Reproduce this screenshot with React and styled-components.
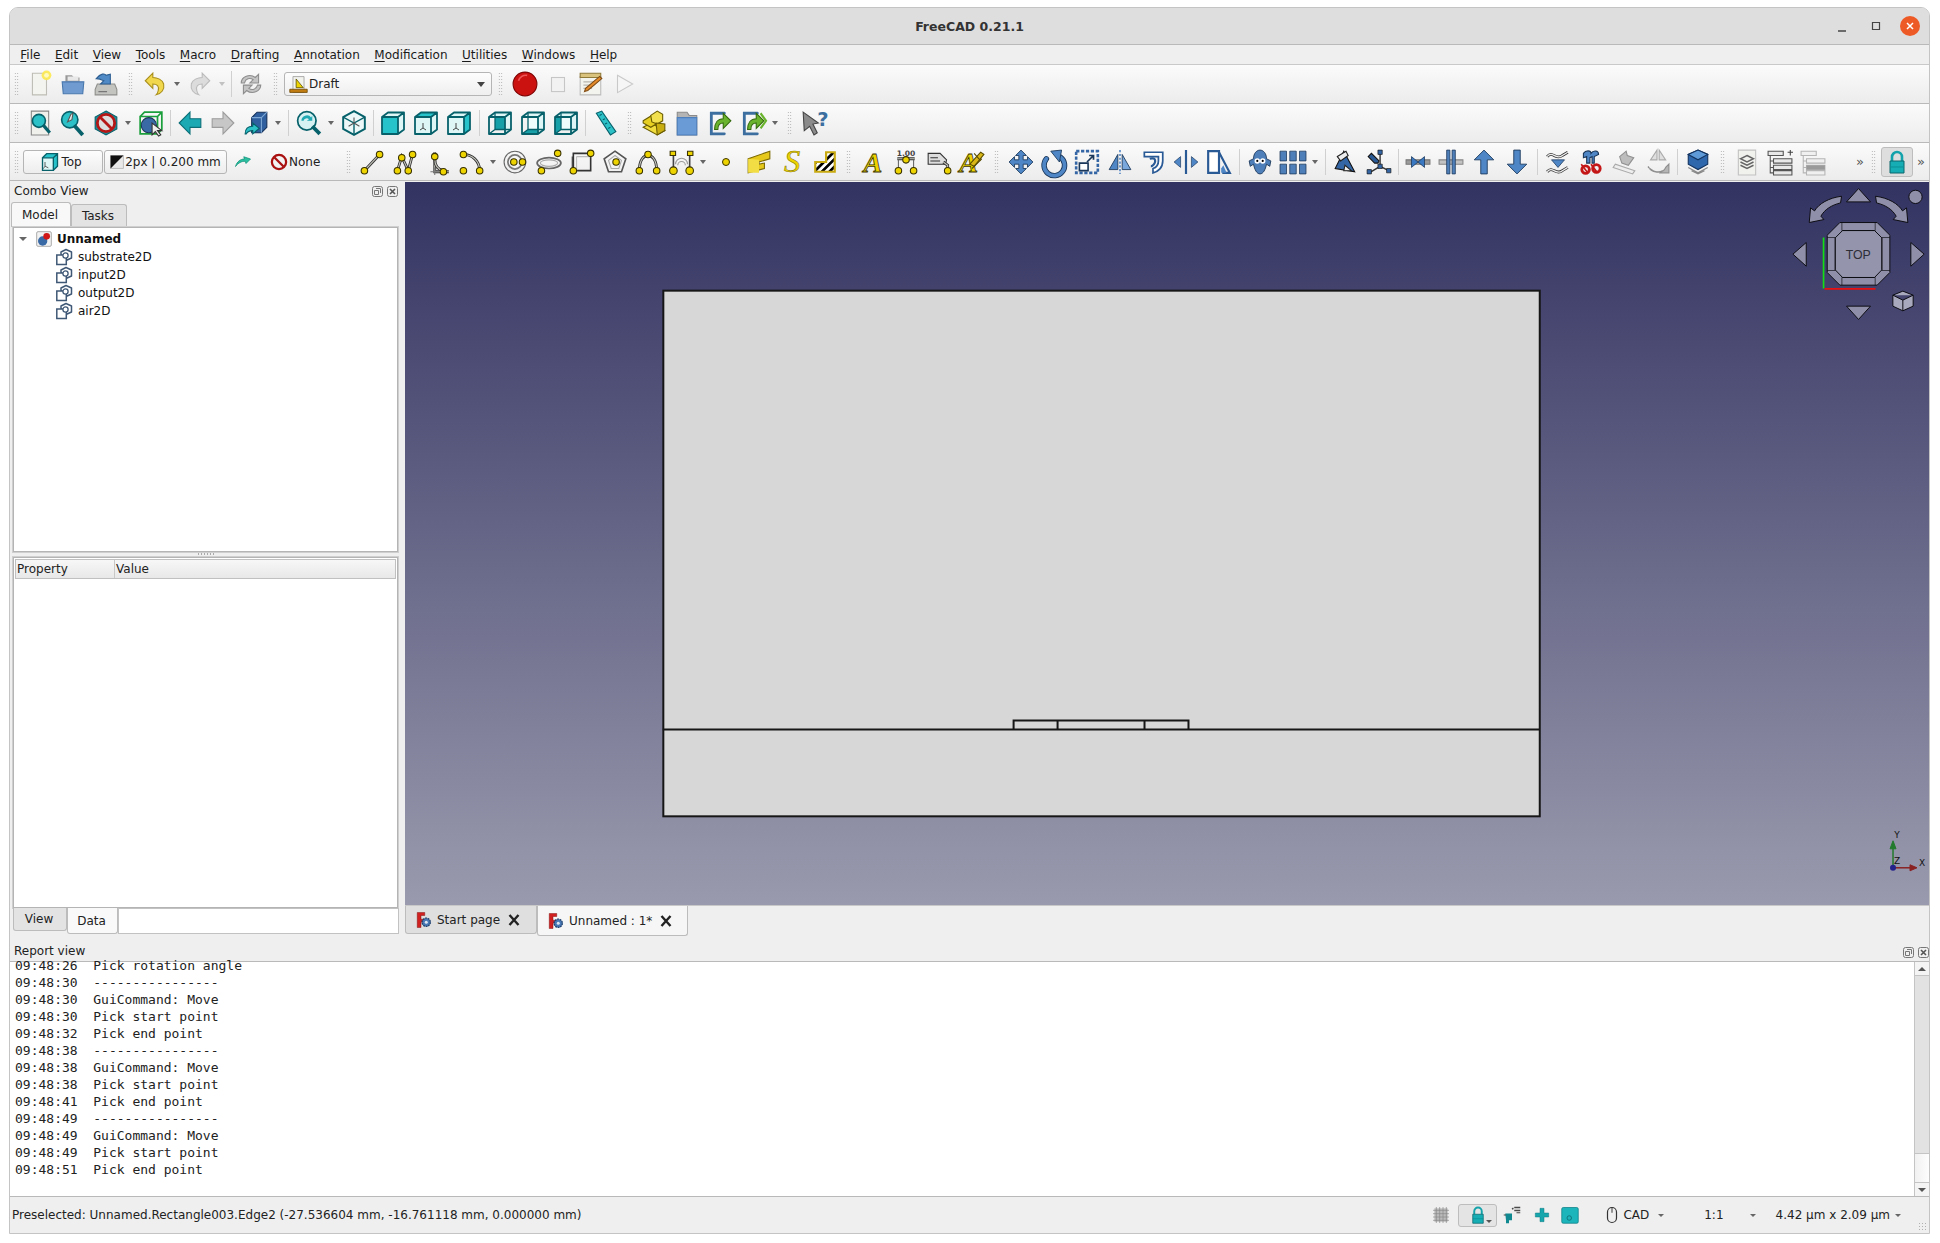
import React from "react";
import styled, { createGlobalStyle } from "styled-components";

const Global = createGlobalStyle`
  html, body { margin: 0; padding: 0; background: #fff; }
  body { font-family: "DejaVu Sans", sans-serif; font-size: 12px; color: #111; }
`;
const Page = styled.div`
  width: 1940px; height: 1243px; padding: 7px 10px 9px 9px; box-sizing: border-box; background: #fff;
`;
const Win = styled.div`
  width: 100%; height: 100%; display: flex; flex-direction: column; box-sizing: border-box;
  border: 1px solid #c4c4c4; border-radius: 9px 9px 0 0; background: #efefef; overflow: hidden;
`;
const TitleBar = styled.div`
  height: 36px; flex: none; background: #dedede; border-bottom: 1px solid #b9b9b9; position: relative;
  display: flex; align-items: center; justify-content: center; font-weight: 700; font-size: 12.5px; color: #333;
`;
const WinBtns = styled.div`
  position: absolute; right: 9px; top: 8px; display: flex; align-items: center; gap: 14px;
`;
const WinBtn = styled.div`
  width: 20px; height: 20px; display: flex; align-items: center; justify-content: center;
  border-radius: 50%; background: ${p => (p.$close ? "#ee5a25" : "transparent")};
`;
const MenuBar = styled.div`
  height: 19px; flex: none; padding: 0 0 0 3px; display: flex; align-items: center; background: #efefef;
  border-bottom: 1px solid #c9c9c9; 
`;
const MenuItem = styled.span`
  padding: 0 7.28px; line-height: 20px; color: #1a1a1a;
  & u { text-underline-offset: 2px; text-decoration-thickness: 1px; }
`;
const Bar = styled.div`
  height: ${p => p.$h || 39}px; flex: none; display: flex; align-items: center; box-sizing: border-box;
  background: linear-gradient(#fbfbfb, #ececec); border-bottom: 1px solid #b9b9b9;
`;
const Tool = styled.div`
  width: ${p => p.$w || 33}px; height: 30px; flex: none; display: flex; align-items: center; justify-content: center;
`;
const Drop = styled.div`
  width: 12px; flex: none; height: 30px; display: flex; align-items: center; justify-content: center;
  &::before { content: ""; border-left: 3.5px solid transparent; border-right: 3.5px solid transparent; border-top: 4px solid ${p => (p.$dim ? "#c2c2c2" : "#666")}; }
`;
const Sep = styled.div`
  width: ${p => p.$w || 6}px; flex: none; height: 26px; display: flex; justify-content: center;
  &::before { content: ""; width: 1px; background: #d0d0d0; }
`;
const Grip = styled.div`
  width: ${p => p.$w || 16}px; flex: none; height: 24px; display: flex; justify-content: center;
  &::before { content: ""; width: 5px; background: radial-gradient(circle, #a9a9a9 0.6px, transparent 0.8px) 0 0 / 2.5px 3px; }
`;
const Combo = styled.div`
  width: 208px; height: 24px; flex: none; box-sizing: border-box; border: 1px solid #b5b5b5; border-radius: 3px;
  background: linear-gradient(#fdfdfd, #efefef); display: flex; align-items: center; padding: 0 6px 0 4px; gap: 1px; color: #222; font-size: 12px;
`;
const ComboArrow = styled.span`
  margin-left: auto; border-left: 4px solid transparent; border-right: 4px solid transparent; border-top: 5px solid #444;
`;
const PushBtn = styled.div`
  width: ${p => p.$w}px; height: 24px; flex: none; box-sizing: border-box; border: 1px solid #b5b5b5; border-radius: 3px; margin-right: 1px; padding-right: ${p => p.$pr || 0}px;
  background: linear-gradient(#fdfdfd, #ededed); display: flex; align-items: center; justify-content: center; gap: 1px; color: #222;
`;
const NoneBtn = styled.div`
  width: 68px; margin-left: 10px; margin-right: 7px; flex: none; display: flex; align-items: center; gap: 1px; padding-left: 3px; box-sizing: border-box; color: #222;
`;
const LockBtn = styled.div`
  width: 32px; height: 30px; flex: none; box-sizing: border-box; border: 1px solid #bdbdbd; border-radius: 3px; background: #dedede;
  display: flex; align-items: center; justify-content: center;
`;
const Chev = styled.div`
  flex: none; width: ${p => p.$w || 12}px; margin-left: ${p => p.$ml || 0}px; text-align: center; color: #555; font-size: 13px; font-family: "DejaVu Sans", sans-serif;
`;
const Main = styled.div`
  flex: none; height: 754px; display: flex;
`;
const LeftDock = styled.div`
  width: 395px; flex: none; display: flex; flex-direction: column; box-sizing: border-box; padding: 0 2px 0 2px;
`;
const DockHead = styled.div`
  height: 20px; flex: none; display: flex; align-items: center; padding-left: 2px; padding-right: 5px; position: relative; color: #222;
`;
const DockBtns = styled.div`
  margin-left: auto; display: flex; gap: 4px; margin-bottom: ${p => p.$mb || 0}px;
`;
const Tabs = styled.div`
  height: 26px; flex: none; display: flex; align-items: flex-end; margin-left: -1px;
`;
const Tab = styled.div`
  width: ${p => p.$w}px; box-sizing: border-box; height: ${p => (p.$on ? 25 : 23)}px; display: flex; align-items: center; justify-content: center; padding-right: 2px;
  background: ${p => (p.$on ? "#f8f8f8" : "#e3e3e3")}; border: 1px solid #bcbcbc; border-bottom: 0; border-radius: 3px 3px 0 0; color: #222;
`;
const TreeFrame = styled.div`
  height: 325px; flex: none; box-sizing: border-box; border: 1px solid #b4b4b4; outline: 1px solid #cfcfcf; background: #fff; margin: 0 5px 0 1px; padding-top: 2px;
`;
const TreeRow = styled.div`
  height: 18px; display: flex; align-items: center; gap: ${p => p.$g || 6}px; padding-left: ${p => p.$in}px; font-weight: ${p => (p.$b ? 700 : 400)}; color: #111;
`;
const Twisty = styled.span`
  width: 0; height: 0; border-left: 4px solid transparent; border-right: 4px solid transparent; border-top: 4px solid #666; margin-right: 4px;
`;
const Splitter = styled.div`
  height: 5px; flex: none; position: relative;
  &::after { content: ""; position: absolute; left: 185px; top: 1px; width: 17px; height: 2px; background: radial-gradient(circle, #aaa 0.6px, transparent 0.8px) 0 0 / 3px 2px; }
`;
const PropFrame = styled.div`
  height: 351px; flex: none; box-sizing: border-box; border: 1px solid #b4b4b4; outline: 1px solid #cfcfcf; margin: 0 5px 0 1px; padding: 1px; background: #fff; display: flex; flex-direction: column;
`;
const PropHead = styled.div`
  height: 20px; flex: none; display: flex; background: linear-gradient(#f7f7f7, #e8e8e8); border: 1px solid #c0c0c0; box-sizing: border-box; color: #222;
`;
const PropCell = styled.div`
  width: ${p => p.$w}; box-sizing: border-box; padding-left: 1px; line-height: 19px; border-right: ${p => (p.$line ? "1px solid #c8c8c8" : "0")};
`;
const BottomTabs = styled.div`
  height: 26px; flex: none; display: flex; align-items: stretch; margin: 0 4px 0 1px;
`;
const BTab = styled.div`
  width: ${p => p.$w}px; flex: none; box-sizing: border-box; height: ${p => (p.$on ? 26 : 23)}px; display: flex; align-items: center; justify-content: center; color: #222; padding-right: 2px;
  background: ${p => (p.$on ? "#f9f9f9" : "#e3e3e3")}; border: 1px solid #bcbcbc; border-top: 0; border-radius: 0 0 3px 3px;
`;
const BFill = styled.div`
  flex: 1; background: #fff; border: 1px solid #c2c2c2; box-sizing: border-box; height: 26px;
`;
const Center = styled.div`
  flex: 1; min-width: 0; display: flex; flex-direction: column;
`;
const Viewport = styled.div`
  flex: none; height: 723px; position: relative; overflow: hidden; margin-top: 1px;
  background: linear-gradient(#333362, #9a9aae); border-bottom: 1px solid #c8c8c8;
`;
const CanvasSvg = styled.svg`
  position: absolute; left: 0; top: 0; width: 100%; height: 100%;
`;
const MdiTabs = styled.div`
  flex: 1; display: flex; align-items: flex-start;
`;
const MdiTab = styled.div`
  width: ${p => p.$w}px; box-sizing: border-box; height: ${p => (p.$on ? 30 : 28)}px; display: flex; align-items: center; gap: 4px; padding-left: 9px; color: #222; flex: none;
  background: ${p => (p.$on ? "#f6f6f6" : "#dfdfdf")}; border: 1px solid #bcbcbc; border-top: 0; border-radius: 0 0 3px 3px;
`;
const CloseX = styled.svg`
  width: 14px; height: 14px; margin-left: 3px; flex: none;
`;
const Report = styled.div`
  height: 262px; flex: none; display: flex; flex-direction: column;
`;
const ReportHead = styled.div`
  height: 25px; flex: none; display: flex; align-items: flex-end; padding: 0 0 1px 4px; color: #222; position: relative;
  & > span { line-height: 18px; }
`;
const ReportBody = styled.div`
  flex: 1; display: flex; border-top: 1px solid #b9b9b9; border-bottom: 1px solid #b9b9b9; background: #fff; min-height: 0;
`;
const Log = styled.div`
  flex: 1; overflow: hidden; font-family: "DejaVu Sans Mono", monospace; font-size: 13px; line-height: 17px; color: #222; padding-left: 5px; white-space: pre;
  margin-top: -5px;
`;
const Scroll = styled.div`
  width: 14px; flex: none; display: flex; flex-direction: column; background: #e9e9e9; border-left: 1px solid #c4c4c4;
`;
const ScrollEnd = styled.div`
  height: 13px; flex: none; background: #f4f4f4; display: flex; align-items: center; justify-content: center;
  border-top: ${p => (p.$up ? "0" : "1px solid #c4c4c4")};
  &::before { content: ""; border-left: 4px solid transparent; border-right: 4px solid transparent; ${p => (p.$up ? "border-bottom: 4px solid #555;" : "border-top: 4px solid #555;")} }
`;
const ScrollThumb = styled.div`
  height: 179px; flex: none; background: #e2e2e2; border-top: 1px solid #c4c4c4; border-bottom: 1px solid #c4c4c4; box-sizing: border-box;
`;
const ScrollTrack = styled.div`
  flex: 1; background: linear-gradient(90deg, #f1f1f1, #fdfdfd);
`;
const Status = styled.div`
  flex: 1; display: flex; align-items: center; padding-left: 2px; color: #222; position: relative;
`;
const StatusMsg = styled.span` flex: 1; `;
const StatBtn = styled.div`
  width: ${p => p.$w}px; flex: none; display: flex; align-items: center; justify-content: center; margin-left: ${p => p.$ml || 0}px; gap: 3px;
`;
const StatLock = styled.div`
  width: 39px; height: 23px; flex: none; box-sizing: border-box; border: 1px solid #bdbdbd; border-radius: 3px; background: #e4e4e4; display: flex; align-items: center; justify-content: center; position: relative;
  &::after { content: ""; position: absolute; right: 4px; bottom: 3px; border-left: 3px solid transparent; border-right: 3px solid transparent; border-top: 3px solid #555; }
`;
const StatDrop = styled.span`
  flex: none; margin-left: ${p => p.$ml || 0}px; border-left: 3px solid transparent; border-right: 3px solid transparent; border-top: 3px solid #666;
`;
const StatText = styled.span`
  flex: none; margin-left: ${p => p.$ml || 0}px; color: #222;
`;
const Resize = styled.div`
  position: absolute; right: 1px; bottom: 1px; width: 10px; height: 10px;
  background: radial-gradient(circle, #b0b0b0 0.7px, transparent 0.9px) 0 0 / 3px 3px;
`;
const Ico = styled.svg`
  width: ${p => p.$s || 26}px; height: ${p => p.$s || 26}px; flex: none; overflow: visible;
`;

/* ---- drawings ---- */
const I = ({ children, s, vb = "0 0 24 24" }) => <Ico $s={s} viewBox={vb}>{children}</Ico>;
const Dot = ({ x, y, r = 3 }) => <circle cx={x} cy={y} r={r} fill="#edd400" stroke="#3a3300" strokeWidth="1" />;
const DL = ({ d }) => (<g fill="none"><path d={d} stroke="#333" strokeWidth="2.6" /><path d={d} stroke="#c8c8c0" strokeWidth="1" /></g>);
const BD = "#1a3658", TL = "#27c3cb", TD = "#07616b";

const NewDoc = () => <I><path d="M5 2h13v20H5z" fill="#f3f3ef" stroke="#bdbdb5" /><circle cx="18" cy="4" r="4.5" fill="#fce94f" opacity=".9" /><circle cx="18" cy="4" r="2.2" fill="#fffbc0" /></I>;
const OpenF = () => <I><path d="M5 4h6l2 2h5v4H5z" fill="#999" /><path d="M2 10h20l-1 11H3z" fill="#6f9bd0" stroke="#4a78ad" /><path d="M7 5h10v4H7z" fill="#e8e8e8" /></I>;
const SaveD = () => <I><path d="M4 12h16l2 5v5H2v-5z" fill="#c3c3c0" stroke="#8d8d8a" /><path d="M5 19h8" stroke="#777" /><path d="M3 7c4-5 8-5 9-3l4-1v9h-9l3-3c-2-1-4-2-7-2z" fill="#4f8ac6" stroke="#2d5e92" /></I>;
const Undo = ({ dim }) => <I><g transform={dim ? "translate(24 0) scale(-1 1)" : ""}><path d="M10 2L3 9l7 7v-4c4 0 6 2 5 6-.4 2-1 3-2 4 5-1 8-5 7-10-1-4-6-6-10-6z" fill={dim ? "#dcdcdc" : "#f0d74b"} stroke={dim ? "#bcbcbc" : "#a98f1c"} /></g></I>;
const Refresh = () => <I><path d="M3 11c0-6 8-9 13-5l3-3v8h-8l3-3c-3-2-7-1-8 3z" fill="#c4c4c4" stroke="#8e8e8e" /><path d="M21 13c0 6-8 9-13 5l-3 3v-8h8l-3 3c3 2 7 1 8-3z" fill="#c4c4c4" stroke="#8e8e8e" /></I>;
const DraftMini = () => <I s={19}><path d="M5 2h14v20H5z" fill="#f2f2ee" stroke="#999" /><path d="M9 5v11h9z" fill="#edd400" stroke="#5a4d00" /><path d="M1 18h22v4H1z" fill="#c17d11" stroke="#6d4700" /></I>;
const Record = () => <I><circle cx="12" cy="12" r="11" fill="#cc1111" stroke="#7d0505" /><path d="M6 9a7 7 0 0 1 8-5" stroke="#ee5555" fill="none" strokeWidth="1.5" /></I>;
const Stop = () => <I><rect x="6" y="6" width="12" height="13" fill="#f2f2f2" stroke="#c6c6c6" /></I>;
const Notepad = () => <I><path d="M2 5h19v17H2z" fill="#f4f4ee" stroke="#bbb" /><path d="M2 2h19v4H2z" fill="#d9c27b" stroke="#8f7a3a" /><path d="M5 10h13M5 13h10M5 16h8" stroke="#b5b5ad" /><path d="M6 19l3-1 13-11-2-2L7 16z" fill="#e58b2a" stroke="#7d4b14" /></I>;
const Play = () => <I><path d="M6 4l14 8-14 8z" fill="#f6f6f6" stroke="#c9c9c9" /></I>;

const FitAll = () => <I><path d="M4 1h16v22H4z" fill="#f0f0ec" stroke="#888" /><circle cx="11" cy="10" r="6" fill="#2cc0c7" stroke={TD} strokeWidth="1.5" /><path d="M15 14l6 7" stroke={TD} strokeWidth="3" /></I>;
const FitSel = () => <I><circle cx="9" cy="9" r="7.5" fill="#2cc0c7" stroke={TD} strokeWidth="1.5" /><path d="M13 14l8 9" stroke={TD} strokeWidth="3.5" /><path d="M12 3l-1 6 -4 2 3 -7z" fill="#e8e8e8" stroke="#555" /></I>;
const DrawStyle = () => <I><path d="M12 1l10 5.5v11L12 23 2 17.5v-11z" fill="#1d8d97" stroke={TD} /><circle cx="12" cy="12" r="8" fill="#ddd" stroke="#b51616" strokeWidth="2.6" /><path d="M6.5 6.5l11 11" stroke="#b51616" strokeWidth="2.6" /></I>;
const BoxSel = () => <I><path d="M2 6h16v16H2zM2 6l4-4h16v16l-4 4M18 6l4-4" fill="none" stroke="#1b9f3c" strokeWidth="1.6" /><ellipse cx="10" cy="14" rx="7" ry="7" fill="#3a6aa5" stroke="#1a3658" /><path d="M13 12v11l3-3 3 4 2-1-3-4h4z" fill="#eee" stroke="#333" /></I>;
const ArrowL = ({ c = "#1ba9b3", d = "#0c6f78" }) => <I><path d="M2 12L12 2v6h10v8H12v6z" fill={c} stroke={d} /></I>;
const ArrowR = () => <I><path d="M22 12L12 2v6H2v8h10v6z" fill="#c7c7c7" stroke="#9c9c9c" /></I>;
const WbBox = () => <I><path d="M8 7l5-5h9v14l-5 5H8z" fill="#2f5f9e" stroke="#16315a" /><path d="M8 7h9v14M17 7l5-5" stroke="#7da7d4" fill="none" /><path d="M2 22c0-5 3-7 7-7v-3l6 5-6 5v-3c-3 0-5 1-6 3z" fill="#2cc0c7" stroke={TD} /></I>;
const ZoomSync = () => <I><circle cx="10" cy="10" r="8.5" fill="#d5f1f2" stroke={TD} strokeWidth="1.6" /><path d="M5 10a5 5 0 0 1 9-3l1-2v5h-5l2-1.500a3 3 0 0 0-5 1.500z" fill="#1fa9b2" /><path d="M15 15l7 7" stroke={TD} strokeWidth="3.5" /></I>;
const Iso = () => <I><path d="M12 1l10 5.500v11L12 23 2 17.500v-11z" fill="#ecf8f8" stroke={TD} strokeWidth="1.8" /><path d="M2 6.500l10 5.500 10-5.500M12 12v11" fill="none" stroke={TD} strokeWidth="1.3" /><path d="M12 7v5M7 15l5-3M17 15l-5-3" stroke="#555" /></I>;
const Cube = ({ face }) => {
  const f = n => (face === n ? TL : (n === "front" || n === "top" || n === "right" ? "#dff6f6" : "transparent"));
  const back = face === "back" || face === "bottom" || face === "left";
  return (
    <Ico $s={24} viewBox="0 0 24 24">
      <path d="M7 1.500h16v17H7z" fill="#f0fbfb" />
      {face === "back" && <path d="M7 1.500h16v17H7z" fill="#18a0a9" />}
      {face === "bottom" && <path d="M1 23l6-4.500h16l-6 4.500z" fill="#18a0a9" />}
      {face === "left" && <path d="M1 6l6-4.500v17L1 23z" fill="#18a0a9" />}
      <path d="M1 6h16v17H1z" fill={back ? "none" : f("front")} />
      <path d="M1 6l6-4.500h16L17 6z" fill={f("top")} />
      <path d="M17 6l6-4.500v17L17 23z" fill={f("right")} />
      {!back && face !== "front" && <path d="M9 12v5M6 19l3-2M12 19l-3-2" stroke="#444" fill="none" />}
      <path d="M1 6h16v17H1zM1 6l6-4.500h16v17L17 23M17 6l6-4.500" fill="none" stroke={TD} strokeWidth="1.800" strokeLinejoin="round" />
      {back && <path d="M7 1.500v17h16M7 18.500L1 23" fill="none" stroke={TD} strokeWidth="1.300" />}
    </Ico>
  );
};
const Measure = () => <I><path d="M4 3l5-2 13 19-5 3z" fill="#2cc0c7" stroke={TD} /><path d="M7 5l2-1M10 9l2-1M12 13l2-1M15 17l2-1" stroke={TD} /></I>;
const Part = () => <I><path d="M2 16l7-4 13 7-7 4z" fill="#f0dc3c" stroke="#6a5c00" /><path d="M2 10l8-5 4 2v6l-5 3-7-4z" fill="#e7cf22" stroke="#6a5c00" /><path d="M9 5l6-4 5 3v6l-5 3-5-2z" fill="#f2e04e" stroke="#6a5c00" /><path d="M14 12l8 1v6l-7 4z" fill="#c9ae12" stroke="#6a5c00" /></I>;
const FolderB = () => <I><path d="M3 2h9l2 3h7v18H3z" fill="#b4b4b4" stroke="#8b8b8b" /><path d="M3 7h18v16H3z" fill="#6b9bd6" stroke="#4d7fbd" /></I>;
const LinkI = ({ sub }) => <I><path d="M16 3H4v19h12" fill="none" stroke="#3c6fa0" strokeWidth="2.6" strokeLinecap="round" /><path d="M7 18c0-6 3-10 8-10V3l7 7-7 7v-5c-3 0-5 1-5 6z" fill="#6ab42d" stroke="#346b0c" />{sub && <path d="M19 3l5 7-5 7" stroke="#6ab42d" fill="none" strokeWidth="2" />}</I>;
const What = () => <I><path d="M2 2l14 10-5 1 4 8-3 2-4-8-5 4z" fill="#8b8b8b" stroke="#444" /><text x="15" y="15" fontFamily="DejaVu Sans" fontWeight="700" fontSize="18" fill="#3c6fa0">?</text></I>;

const TopCube = () => <I s={20}><path d="M3 7h13v15H3z" fill="#dff6f6" /><path d="M3 7l5-5h13l-5 5z" fill={TL} /><path d="M16 7l5-5v15l-5 5z" fill="#27c3cb" /><path d="M6 12v5l4 2M6 17l-2 3" stroke="#444" fill="none" /><path d="M3 7h13v15H3zM3 7l5-5h13v15l-5 5M16 7l5-5" fill="none" stroke={TD} strokeWidth="1.600" /></I>;
const LW = () => <I s={14}><path d="M1 1h22v22H1z" fill="#e8e8e8" stroke="#999" /><path d="M1 23V1h22z" fill="#111" /></I>;
const GreenArrow = () => <I s={18}><path d="M2 18c2-7 7-10 12-10l-1-3 9 3-6 6-1-3c-5 0-9 2-13 7z" fill="#2cc0a0" stroke="#0d8f78" /></I>;
const NoneIco = () => <I s={18}><circle cx="12" cy="12" r="9.500" fill="none" stroke="#a11" strokeWidth="3" /><path d="M6 6l12 12" stroke="#a11" strokeWidth="3" /></I>;

const ILine = () => <I><DL d="M5 20L19 5" /><Dot x={5} y={20} /><Dot x={19} y={5} /></I>;
const IWire = () => <I><DL d="M5 20L9 7l6 13 4-15" /><Dot x={5} y={20} /><Dot x={9} y={8} /><Dot x={15} y={20} /><Dot x={19} y={5} /></I>;
const IFillet = () => <I><DL d="M9 3v18h13" /><DL d="M9 9c0 6 3 10 8 11" /><Dot x={9} y={7} /><Dot x={17} y={21} /><path d="M5 21h8M9 17v7" stroke="#777" /></I>;
const IArc = () => <I><DL d="M5 5c8 0 15 6 15 15" /><Dot x={5} y={5} /><Dot x={5} y={20} /><Dot x={20} y={20} /></I>;
const ICircle = () => <I><circle cx="11" cy="12" r="10" fill="none" stroke="#666" /><circle cx="11" cy="12" r="6.500" fill="none" stroke="#777" strokeWidth="1.6" /><Dot x={10} y={12} /><Dot x={18} y={12} /></I>;
const IEllipse = () => <I><ellipse cx="12" cy="13" rx="11" ry="5" fill="none" stroke="#666" strokeWidth="1.6" /><ellipse cx="12" cy="13" rx="8" ry="3" fill="none" stroke="#aaa" /><Dot x={20} y={4} /><Dot x={5} y={20} /></I>;
const IRect = () => <I><path d="M4 4h16v16H4z" fill="none" stroke="#333" strokeWidth="1.500" /><path d="M7 7h13M7 7v13" stroke="#bbb" fill="none" /><path d="M3 7v15M17 4h5" stroke="#333" fill="none" /><Dot x={20} y={4} /><Dot x={4} y={20} /></I>;
const IPolygon = () => <I><path d="M12 2l10 7-4 12H6L2 9z" fill="none" stroke="#555" strokeWidth="1.500" /><path d="M12 6l6 4.500-2.500 7.500h-7L6 10.500z" fill="none" stroke="#aaa" /><Dot x={13} y={12} /></I>;
const IBSpline = () => <I><DL d="M4 20c0-10 4-14 8-14s8 4 8 14" /><Dot x={4} y={20} /><Dot x={12} y={5} /><Dot x={20} y={20} /></I>;
const IBezier = () => <I><path d="M5 3v17M20 3v17" stroke="#444" strokeWidth="1.500" /><path d="M7 14a5 5 0 0 1 11 0M9 15a3.500 3.500 0 0 1 7 0" fill="none" stroke="#999" /><path d="M2 2h5v4H2zM18 2h5v4h-5z" fill="#edd400" stroke="#3a3300" /><Dot x={5} y={20} r={3.500} /><Dot x={20} y={20} r={3.500} /></I>;
const IPoint = () => <I s={24}><Dot x={12} y={12} r={3.500} /></I>;
const IFace = () => <I><path d="M2 9l20-7v7l-10 3v2l5-1v5L2 22z" fill="#e5c81a" stroke="#7a6800" /><path d="M2 9l10 1v12H2z" fill="#f2dd45" /></I>;
const IShape = () => <I vb="0 0 24 24"><text x="12" y="21" textAnchor="middle" fontFamily="Liberation Serif" fontStyle="italic" fontSize="30" fill="#edd400" stroke="#8a7800" strokeWidth=".5">S</text></I>;
const IHatch = () => <I><defs><pattern id="hp" width="5" height="5" patternTransform="rotate(45)" patternUnits="userSpaceOnUse"><rect width="5" height="5" fill="#fff" /><rect width="2.500" height="5" fill="#000" /></pattern></defs><path d="M3 12h10V3h8v18H3z" fill="url(#hp)" stroke="#c8a90f" strokeWidth="2" /></I>;
const IText = () => <I><text x="12" y="21" textAnchor="middle" fontFamily="Liberation Serif" fontStyle="italic" fontWeight="700" fontSize="26" fill="#edd400" stroke="#3a3300" strokeWidth=".7">A</text></I>;
const IDim = () => <I><text x="12" y="6.500" textAnchor="middle" fontFamily="DejaVu Sans" fontWeight="700" fontSize="7" fill="#444">1.00</text><DL d="M4 9h16" /><path d="M5 10v11M19 10v11" stroke="#666" /><Dot x={12} y={10} /><Dot x={5} y={20} /><Dot x={19} y={20} /></I>;
const ILabel = () => <I><path d="M2 4h11l6 6-1 4H2z" fill="#ddd" stroke="#333" /><path d="M4 8h7M4 11h9" stroke="#333" /><DL d="M16 12l4 3v4" /><Dot x={20} y={20} /></I>;
const IStyle = () => <I><text x="9" y="21" textAnchor="middle" fontFamily="Liberation Serif" fontStyle="italic" fontWeight="700" fontSize="26" fill="#edd400" stroke="#3a3300" strokeWidth=".7">A</text><path d="M10 14l10-11 3 2-9 11z" fill="#d9b817" stroke="#5a4d00" /><path d="M12 18l9-9M14 4l6 7" stroke="#5a4d00" /></I>;

const IMove = () => <I><path d="M12 1l5 5h-3v4h4V7l5 5-5 5v-3h-4v4h3l-5 5-5-5h3v-4H6v3l-5-5 5-5v3h4V6H7z" fill="#4f86c6" stroke={BD} strokeWidth=".8" /></I>;
const IRotate = () => <I><path d="M5 9a9.500 9.500 0 1 0 13-1.500" fill="none" stroke={BD} strokeWidth="5" strokeLinecap="round" /><path d="M5 9a9.500 9.500 0 1 0 13-1.500" fill="none" stroke="#4f86c6" strokeWidth="3.400" strokeLinecap="round" /><path d="M9 2l10-1-2 11z" fill="#4f86c6" stroke={BD} strokeWidth=".8" strokeLinejoin="round" /></I>;
const IScale = () => <I><path d="M2 2h20v20H2z" fill="none" stroke="#3465a4" strokeWidth="2.400" strokeDasharray="3 1.500" /><path d="M5 13h8v7H5z" fill="#fff" stroke={BD} strokeWidth="1.500" /><path d="M12 12l6-6M14 6h4v4" fill="none" stroke={BD} strokeWidth="1.600" /></I>;
const IMirror = () => <I><path d="M12 1v22" stroke="#5f8fc8" strokeDasharray="2 1.500" strokeWidth="1.600" /><path d="M10 5v14H2z" fill="#4f86c6" stroke={BD} strokeWidth=".8" /><path d="M14 5v14h8z" fill="#7aa7dc" stroke={BD} strokeWidth=".8" /></I>;
const IOffset = () => <I><path d="M4 3h17v8c0 6-4 10-9 11v-4c3-1 5-3 5-7V7H4z" fill="#fff" stroke="#2a5a96" strokeWidth="1.600" /><path d="M9 9c3-1 5 0 5 2s-2 5-4 5" fill="none" stroke="#2a5a96" strokeWidth="2" /></I>;
const IStretch = () => <I><path d="M12 1v22" stroke="#2a5a96" strokeWidth="2" /><path d="M1 12l6-5v10zM23 12l-6-5v10z" fill="#4f86c6" stroke={BD} strokeWidth=".6" /></I>;
const IClone = () => <I><path d="M2 2h10v20H2z" fill="#fff" stroke="#2a5a96" strokeWidth="2" /><path d="M12 3l10 19h-7" fill="none" stroke="#2a5a96" strokeWidth="2" /><path d="M14 18l2-3 3 7h-5z" fill="#4f86c6" /></I>;
const ISheep = () => <I><path d="M6 9c0-5 3-8 6-8s6 3 6 8l4 2-1 5-3-2c-1 5-3 9-6 9s-5-4-6-9l-3 2-1-5z" fill="#4f7fb8" stroke={BD} strokeWidth=".8" /><circle cx="9.500" cy="11" r="2.500" fill="#fff" /><circle cx="14.500" cy="11" r="2.500" fill="#fff" /><circle cx="9.500" cy="11" r="1" /><circle cx="14.500" cy="11" r="1" /></I>;
const IArray = () => <I><path d="M0 2h6v9H0zM9 2h6v9H9zM18 2h6v9h-6zM0 14h6v9H0zM9 14h6v9H9zM18 14h6v9h-6z" fill="#4f7fb8" stroke={BD} strokeWidth=".7" /></I>;
const IEdit1 = () => <I><path d="M10 2l10 19-18-3z" fill="#3465a4" stroke="#111" /><path d="M4 7l8-5 2 4-7 5zM11 15l6 5-7 0z" fill="#eee" stroke="#222" /></I>;
const IEdit2 = () => <I><path d="M13 2v14M3 22l10-6 8 4" stroke="#333" strokeWidth="1.300" fill="none" /><path d="M11 1h4v4h-4zM1 19h4v4H1zM19 18h4v4h-4zM11 14h4v4h-4z" fill="#3465a4" stroke="#111" strokeWidth=".6" /><path d="M2 7l3-3 7 7-1 2-3 0z" fill="#2a5a96" stroke="#111" /></I>;
const ITrim = () => <I><path d="M1 10h22v4H1z" fill="#9a9a9a" stroke="#777" /><path d="M6 7l6 5-6 5zM18 7l-6 5 6 5z" fill="#3a78c2" stroke={BD} strokeWidth=".7" /></I>;
const IJoin = () => <I><path d="M1 10h22v4H1z" fill="#c2c2c2" stroke="#888" /><path d="M8 1h3v22H8zM13 1h3v22h-3z" fill="#4f7fb8" stroke={BD} strokeWidth=".7" /></I>;
const IUp = ({ dn }) => <I><path d={dn ? "M9 1h6v13h6l-9 9-9-9h6z" : "M9 23h6V10h6l-9-9-9 9h6z"} fill="#4f86c6" stroke={BD} strokeWidth=".8" /></I>;
const IWave = () => <I><path d="M2 7c5-6 8 4 14-1l5-3M2 21c5-6 8 4 14-1l5-3" fill="none" stroke="#333" strokeWidth="2.600" /><path d="M2 7c5-6 8 4 14-1l5-3M2 21c5-6 8 4 14-1l5-3" fill="none" stroke="#eee" strokeWidth="1.200" /><path d="M6 10h12l-6 7z" fill="#4f86c6" stroke={BD} strokeWidth=".7" /></I>;
const IFix = () => <I><path d="M5 4c2-3 7-3 7 0 2-3 7-3 7 1l-4 2v6h-2V7l-2 1v5H8V7L5 8z" fill="#4f86c6" stroke={BD} /><circle cx="7" cy="19" r="3.500" fill="none" stroke="#c41616" strokeWidth="2.600" /><circle cx="17" cy="18" r="3.500" fill="none" stroke="#c41616" strokeWidth="2.600" /><path d="M3 14l6 8M12 14l6 8" stroke="#c41616" strokeWidth="1.500" /></I>;
const IGray1 = () => <I><path d="M2 17l18 6 2-3L4 14z" fill="#eee" stroke="#aaa" /><path d="M8 7l6-5 1 4 6 2-5 7-6-2z" fill="#bdbdbd" stroke="#919191" /></I>;
const IGray2 = () => <I><path d="M12 1l-6 9h6zM14 1l6 9h-6z" fill="#dfdfdf" stroke="#aaa" /><path d="M4 16c2 6 13 8 16 1l3-3v8h-8l2-2c-3 2-8 1-10-1l-3-2z" fill="#b5b5b5" stroke="#8f8f8f" /></I>;
const IBlock = () => <I><path d="M3 5l9-4 9 4v9l-9 5-9-5z" fill="#2e67ac" stroke="#12325e" /><path d="M3 5l9 5 9-5-9-4z" fill="#5f9ad8" stroke="#12325e" /><path d="M3 17l9 5 9-5M6 20l6 3 6-3" fill="none" stroke="#888" /></I>;
const ILayers = () => <I><path d="M4 1h16v23H4z" fill="#f1f1ee" stroke="#c2c2c2" /><path d="M12 6l6 3-6 3-6-3zM6 12l6 3 6-3M6 15l6 3 6-3" fill="none" stroke="#666" strokeWidth="1.300" /></I>;
const ITree = ({ dim }) => <I><g fill={dim ? "#f0f0f0" : "#e8e8e8"} stroke={dim ? "#b5b5b5" : "#555"}><path d="M1 2h14v4H1zM6 9h17v4H6zM6 15h17v4H6zM6 20h17v4H6z" /><path d="M3 6v16h3M3 11h3M3 17h3" fill="none" /></g>{!dim && <path d="M19 3h5M21.500 1v5" stroke="#444" />}{dim && <path d="M6 15h17v4H6z" fill="#9a9a9a" />}</I>;
const Lock = ({ s = 26 }) => <I s={s}><path d="M7 11V7a5 5 0 0 1 10 0v4" fill="none" stroke="#15a3ab" strokeWidth="2.600" /><path d="M5 11h14v12H5z" fill="#16aeb4" stroke="#0a666c" /><path d="M5 17h14" stroke="#0a8f95" /></I>;
const Mini = ({ c }) => <Ico $s={11} viewBox="0 0 11 11"><rect x=".5" y=".5" width="10" height="10" rx="2" fill="none" stroke="#777" />{c ? <path d="M3 3l5 5M8 3l-5 5" stroke="#555" strokeWidth="1.600" /> : <path d="M4 2.500h4.500v4.500M2.500 4.500h4v4h-4z" fill="none" stroke="#777" />}</Ico>;
const Tr = () => <Ico $s={16} viewBox="0 0 16 16"><path d="M5 5V3l5-2.500L15.500 3v6L10 11.500H7z" fill="#fff" stroke="#3f5876" strokeWidth="1.500" strokeLinejoin="round" /><path d="M.8 6h9.500v9.500H.8z" fill="#fff" stroke="#3f5876" strokeWidth="1.500" /><circle cx="9.500" cy="6.500" r="2.600" fill="#fff" stroke="#3f5876" strokeWidth="1.300" /></Ico>;
const DocI = () => <I s={16}><rect x="1" y="1" width="22" height="22" rx="2" fill="#f2f2f2" stroke="#888" /><circle cx="10" cy="15" r="7" fill="#3a6aa5" /><circle cx="16" cy="8" r="5" fill="#d01616" /></I>;
const FcLogo = () => <I s={18}><path d="M3 2h10v4H8v5h4v4H8v7H3z" fill="#d02020" stroke="#7a0b0b" strokeWidth=".6" /><circle cx="15" cy="15" r="5.500" fill="#4978b6" stroke="#22436f" strokeWidth="1.800" strokeDasharray="2.400 1" /><circle cx="15" cy="15" r="2" fill="#dfe7f2" /></I>;
const X = () => <CloseX viewBox="0 0 14 14"><path d="M2.500 2l9 10M11.500 2l-9 10" stroke="#222" strokeWidth="2.400" /></CloseX>;
const GridI = () => <I s={16}><path d="M2 2h20v20H2z" fill="#bbb" /><path d="M5 0v24M10 0v24M15 0v24M20 0v24M0 5h24M0 10h24M0 15h24M0 20h24" stroke="#888" /></I>;
const SnapI = () => <I s={18}><path d="M3 10h9v9H8v4H4v-4" fill="#108a90" /><path d="M12 4l2-1M15 2h8M15 6h8" stroke="#4a4a4a" strokeWidth="2" /><path d="M1 12h3M18 9h5" stroke="#444" strokeWidth="1.500" /></I>;
const PlusI = () => <I s={16}><path d="M9 2h6v7h7v6h-7v7H9v-7H2V9h7z" fill="#18a6ad" stroke="#0b777d" strokeWidth=".7" /></I>;
const TealSq = () => <I s={18}><rect x="1" y="2" width="22" height="21" rx="2" fill="#1cb5bb" stroke="#0d7f85" /><circle cx="11" cy="16" r="3" fill="none" stroke="#0a666c" /></I>;
const MouseI = () => <I s={18}><rect x="6" y="2" width="12" height="20" rx="6" fill="none" stroke="#333" strokeWidth="1.600" /><path d="M12 2v7" stroke="#333" strokeWidth="1.300" /></I>;

const menus = [["F", "ile"], ["E", "dit"], ["V", "iew"], ["T", "ools"], ["M", "acro"], ["D", "rafting"], ["A", "nnotation"], ["M", "odification"], ["U", "tilities"], ["W", "indows"], ["H", "elp"]];
const tree = ["substrate2D", "input2D", "output2D", "air2D"];
const log = [
  "09:48:26  Pick rotation angle", "09:48:30  ----------------", "09:48:30  GuiCommand: Move", "09:48:30  Pick start point", "09:48:32  Pick end point",
  "09:48:38  ----------------", "09:48:38  GuiCommand: Move", "09:48:38  Pick start point", "09:48:41  Pick end point",
  "09:48:49  ----------------", "09:48:49  GuiCommand: Move", "09:48:49  Pick start point", "09:48:51  Pick end point",
];
const T = ({ i: Icon, ...p }) => <Tool><Icon {...p} /></Tool>;

function NavCube() {
  const f = "#8f8fa9", s = "#0d0d14";
  const arc = "M243 78L240 98C212 105 192 118 181 138L190 148L146 157L150 113L162 122C175 100 205 83 243 78Z";
  return (
    <g stroke={s} strokeWidth="3" strokeLinejoin="round" fill={f}>
      <path d="M258 95L294 55L330 95Z" />
      <path d={arc} />
      <path d={arc} transform="translate(588 0) scale(-1 1)" />
      <path d="M97 252L137 217V288Z" />
      <path d="M491 252L451 217V288Z" />
      <path d="M258 408H330L294 448Z" />
      <circle cx="465" cy="80" r="20" />
      <path d="M238 157H350L388 195V307L350 345H238L200 307V195Z" />
      <path d="M246 181H342L364 203V299L342 322H246L224 299V203Z" fill="#9494ad" />
      <path d="M244 157V181H344V157M244 345V322H344V345M200 202H224V301H200M388 202H364V301H388" fill="none" strokeWidth="2" />
      <path d="M397 375L427 363 458 375V408L427 422 397 408ZM397 375L427 390 458 375M427 390V422" fill="#a9a9bd" strokeWidth="3" />
      <path d="M189 202V355" stroke="#12e012" strokeWidth="5" />
      <path d="M192 356H345" stroke="#e81010" strokeWidth="5" />
      <text x="293" y="265" textAnchor="middle" stroke="none" fill="#2d2d36" fontFamily="Liberation Sans" fontSize="37">TOP</text>
    </g>
  );
}

export default function App() {
  return (
    <Page>
      <Global />
      <Win>
        <TitleBar>
          FreeCAD 0.21.1
          <WinBtns>
            <WinBtn><Ico $s={14} viewBox="0 0 14 14"><path d="M3 12h8" stroke="#444" strokeWidth="1.300" /></Ico></WinBtn>
            <WinBtn><Ico $s={14} viewBox="0 0 14 14"><path d="M3.500 3.500h7v7h-7z" fill="none" stroke="#444" strokeWidth="1.200" /></Ico></WinBtn>
            <WinBtn $close><Ico $s={14} viewBox="0 0 14 14"><path d="M4 4l6 6M10 4l-6 6" stroke="#fff" strokeWidth="1.500" /></Ico></WinBtn>
          </WinBtns>
        </TitleBar>
        <MenuBar>{menus.map(([a, b], i) => <MenuItem key={i}><u>{a}</u>{b}</MenuItem>)}</MenuBar>
        <Bar>
          <Grip $w={13} /><T i={NewDoc} /><T i={OpenF} /><T i={SaveD} /><Grip /><T i={Undo} /><Drop /><T i={Undo} dim /><Drop $dim /><Sep /><T i={Refresh} /><Grip $w={17} />
          <Combo><DraftMini />Draft<ComboArrow /></Combo>
          <Grip $w={16} /><T i={Record} /><T i={Stop} /><T i={Notepad} /><T i={Play} />
        </Bar>
        <Bar>
          <Grip $w={13} /><T i={FitAll} /><T i={FitSel} /><T i={DrawStyle} /><Drop /><T i={BoxSel} /><Sep /><T i={ArrowL} /><T i={ArrowR} /><T i={WbBox} /><Drop /><Sep $w={8} /><T i={ZoomSync} /><Drop /><T i={Iso} /><Sep />
          <T i={Cube} face="front" /><T i={Cube} face="top" /><T i={Cube} face="right" /><Sep $w={8} /><T i={Cube} face="back" /><T i={Cube} face="bottom" /><T i={Cube} face="left" /><Sep /><T i={Measure} /><Grip /><T i={Part} /><T i={FolderB} /><T i={LinkI} /><T i={LinkI} sub /><Drop /><Grip /><T i={What} />
        </Bar>
        <Bar $h={38}>
          <Grip $w={13} />
          <PushBtn $w={80} $pr={4}><TopCube />Top</PushBtn>
          <PushBtn $w={123}><LW />2px | 0.200 mm</PushBtn>
          <Tool $w={29}><GreenArrow /></Tool>
          <NoneBtn><NoneIco />None</NoneBtn>
          <Grip $w={13} />
          <T i={ILine} /><T i={IWire} /><T i={IFillet} /><T i={IArc} /><Drop /><T i={ICircle} /><T i={IEllipse} /><T i={IRect} /><T i={IPolygon} /><T i={IBSpline} /><T i={IBezier} /><Drop /><T i={IPoint} /><T i={IFace} /><T i={IShape} /><T i={IHatch} /><Grip $w={15} />
          <T i={IText} /><T i={IDim} /><T i={ILabel} /><T i={IStyle} /><Grip />
          <T i={IMove} /><T i={IRotate} /><T i={IScale} /><T i={IMirror} /><T i={IOffset} /><T i={IStretch} /><T i={IClone} /><Sep $w={8} /><T i={ISheep} /><T i={IArray} /><Drop /><Sep $w={8} />
          <T i={IEdit1} /><T i={IEdit2} /><Sep /><T i={ITrim} /><T i={IJoin} /><T i={IUp} /><T i={IUp} dn /><Sep $w={8} /><T i={IWave} /><T i={IFix} /><T i={IGray1} /><T i={IGray2} /><Sep $w={8} /><T i={IBlock} /><Grip />
          <T i={ILayers} /><T i={ITree} /><T i={ITree} dim />
          <Chev $ml={25}>»</Chev><Grip $w={15} /><LockBtn><Lock s={24} /></LockBtn><Chev $ml={2}>»</Chev>
        </Bar>
        <Main>
          <LeftDock>
            <DockHead>Combo View<DockBtns><Mini /><Mini c /></DockBtns></DockHead>
            <Tabs><Tab $w={60} $on>Model</Tab><Tab $w={56}>Tasks</Tab></Tabs>
            <TreeFrame>
              <TreeRow $in={5} $g={5} $b><Twisty /><DocI />Unnamed</TreeRow>
              {tree.map(t => <TreeRow key={t} $in={42}><Tr />{t}</TreeRow>)}
            </TreeFrame>
            <Splitter />
            <PropFrame>
              <PropHead><PropCell $w="99px" $line>Property</PropCell><PropCell $w="auto">Value</PropCell></PropHead>
            </PropFrame>
            <BottomTabs>
              <BTab $w={54}>View</BTab><BTab $w={51} $on>Data</BTab><BFill />
            </BottomTabs>
          </LeftDock>
          <Center>
            <Viewport>
              <CanvasSvg viewBox="0 0 1525 723">
                <g fill="#d7d7d7" stroke="#161616" strokeWidth="2">
                  <rect x="258.500" y="108.500" width="877" height="526" />
                  <path d="M258 547.500H1135" fill="none" />
                  <path d="M609 547V538.500H784V547M653 539V547M740 539V547" fill="none" />
                </g>
                <g transform="translate(1356.500 -12) scale(.3333)"><NavCube /></g>
                <g transform="translate(1489 686)">
                  <path d="M0 0V-22" stroke="#217a2d" strokeWidth="1.500" />
                  <path d="M-3 -19L0 -27 3 -19Z" fill="#217a2d" stroke="#217a2d" />
                  <path d="M0 0H17" stroke="#8a2222" strokeWidth="1.500" />
                  <path d="M17 -3L24 0 17 3Z" fill="#8a2222" stroke="#8a2222" />
                  <circle r="3" fill="#22228a" />
                  <text x="4" y="-30" fontFamily="DejaVu Sans" fontSize="9" fill="#111" textAnchor="middle">Y</text>
                  <text x="4" y="-4" fontFamily="DejaVu Sans" fontSize="9" fill="#111" textAnchor="middle">Z</text>
                  <text x="29" y="-2" fontFamily="DejaVu Sans" fontSize="9" fill="#111" textAnchor="middle">X</text>
                </g>
              </CanvasSvg>
            </Viewport>
            <MdiTabs>
              <MdiTab $w={132}><FcLogo />Start page<X /></MdiTab>
              <MdiTab $w={151} $on><FcLogo />Unnamed : 1*<X /></MdiTab>
            </MdiTabs>
          </Center>
        </Main>
        <Report>
          <ReportHead><span>Report view</span><DockBtns $mb={2}><Mini /><Mini c /></DockBtns></ReportHead>
          <ReportBody>
            <Log>{log.map((l, i) => <div key={i}>{l}</div>)}</Log>
            <Scroll><ScrollEnd $up /><ScrollThumb /><ScrollTrack /><ScrollEnd /></Scroll>
          </ReportBody>
        </Report>
        <Status>
          <StatusMsg>Preselected: Unnamed.Rectangle003.Edge2 (-27.536604 mm, -16.761118 mm, 0.000000 mm)</StatusMsg>
          <GridI />
          <StatBtn $w={9} />
          <StatLock><Lock s={18} /></StatLock>
          <StatBtn $w={30}><SnapI /></StatBtn>
          <StatBtn $w={29}><PlusI /></StatBtn>
          <StatBtn $w={27}><TealSq /></StatBtn>
          <StatBtn $w={20} $ml={19}><MouseI /></StatBtn>
          <StatText $ml={1}>CAD</StatText>
          <StatDrop $ml={9} />
          <StatText $ml={40}>1:1</StatText>
          <StatDrop $ml={26} />
          <StatText $ml={20}>4.42 µm x 2.09 µm</StatText>
          <StatDrop $ml={5} />
          <StatBtn $w={28} />
          <Resize />
        </Status>
      </Win>
    </Page>
  );
}
